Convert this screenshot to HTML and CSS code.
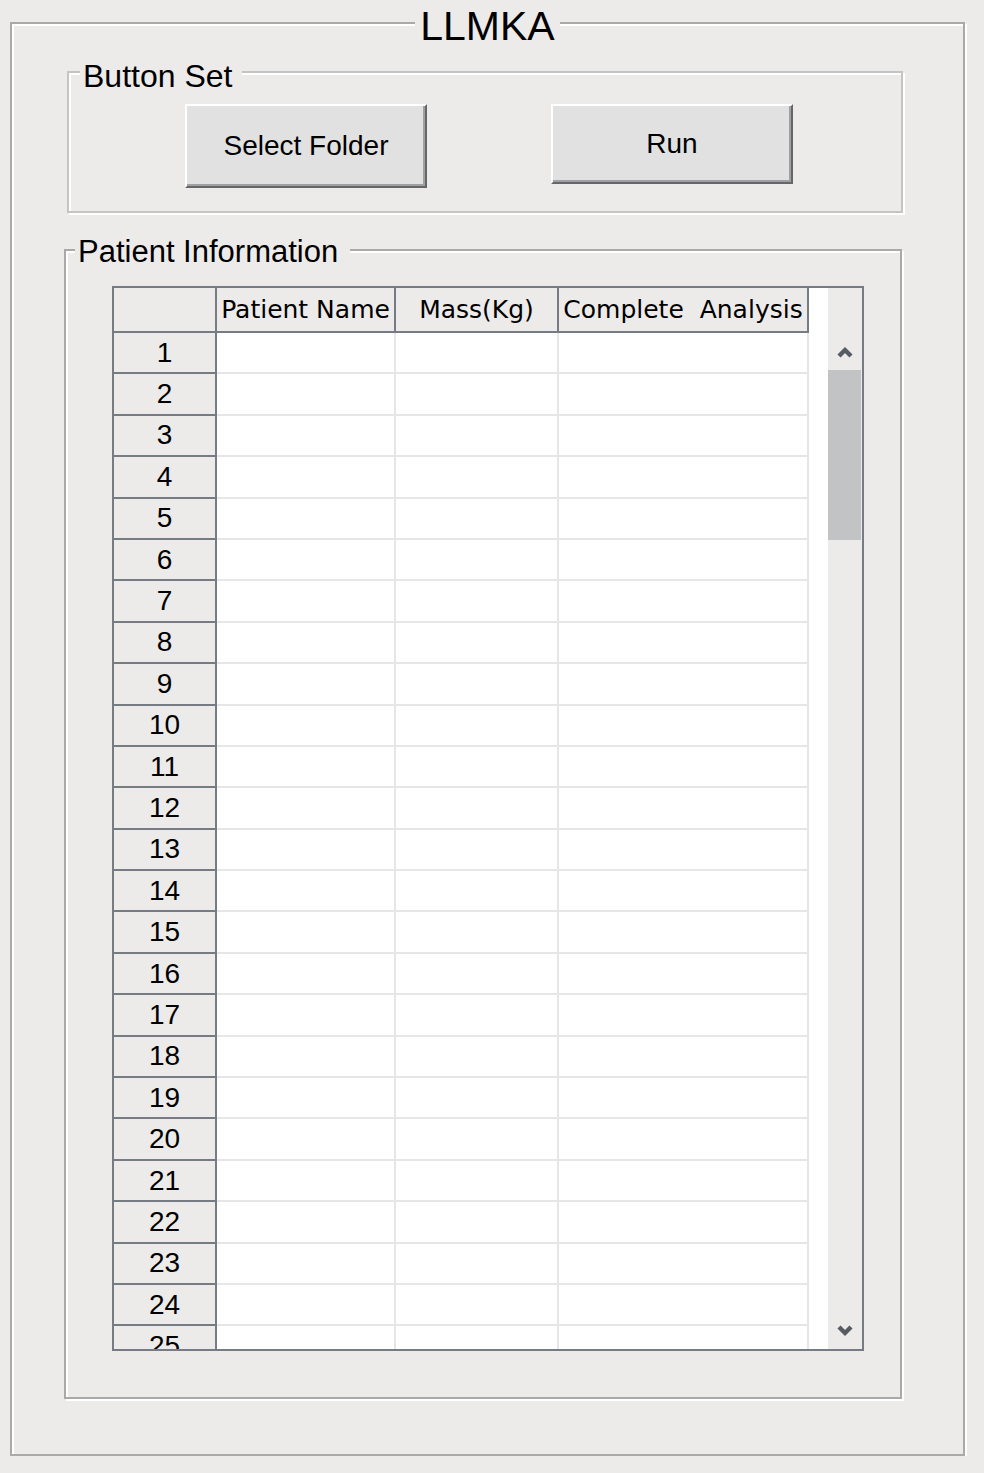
FILE: index.html
```html
<!DOCTYPE html>
<html lang="en">
<head>
  <meta charset="utf-8">
  <title>LLMKA</title>
  <meta name="viewport" content="width=device-width,initial-scale=1">
  <link rel="stylesheet" href="styles.css">
</head>
<body>

  <fieldset class="frame app">
    <legend>LLMKA</legend>

    <!-- Buttons -->
    <fieldset class="frame btn-set">
      <legend>Button Set</legend>
      <div class="btn-row">
        <button class="btn">Select Folder</button>
        <button class="btn run">Run</button>
      </div>
    </fieldset>

    <!-- Patient table -->
    <fieldset class="frame patients">
      <legend>Patient Information</legend>
      <div class="sheet-wrap">
        <div class="sheet">
          <div class="cells">
            <div class="row head">
              <div class="cell rh"></div>
              <div class="cell c-name">Patient Name</div>
              <div class="cell c-mass">Mass(Kg)</div>
              <div class="cell c-done">Complete  Analysis</div>
            </div>
            <div class="row"><div class="cell rh">1</div><div class="cell c-name"></div><div class="cell c-mass"></div><div class="cell c-done"></div></div>
            <div class="row"><div class="cell rh">2</div><div class="cell c-name"></div><div class="cell c-mass"></div><div class="cell c-done"></div></div>
            <div class="row"><div class="cell rh">3</div><div class="cell c-name"></div><div class="cell c-mass"></div><div class="cell c-done"></div></div>
            <div class="row"><div class="cell rh">4</div><div class="cell c-name"></div><div class="cell c-mass"></div><div class="cell c-done"></div></div>
            <div class="row"><div class="cell rh">5</div><div class="cell c-name"></div><div class="cell c-mass"></div><div class="cell c-done"></div></div>
            <div class="row"><div class="cell rh">6</div><div class="cell c-name"></div><div class="cell c-mass"></div><div class="cell c-done"></div></div>
            <div class="row"><div class="cell rh">7</div><div class="cell c-name"></div><div class="cell c-mass"></div><div class="cell c-done"></div></div>
            <div class="row"><div class="cell rh">8</div><div class="cell c-name"></div><div class="cell c-mass"></div><div class="cell c-done"></div></div>
            <div class="row"><div class="cell rh">9</div><div class="cell c-name"></div><div class="cell c-mass"></div><div class="cell c-done"></div></div>
            <div class="row"><div class="cell rh">10</div><div class="cell c-name"></div><div class="cell c-mass"></div><div class="cell c-done"></div></div>
            <div class="row"><div class="cell rh">11</div><div class="cell c-name"></div><div class="cell c-mass"></div><div class="cell c-done"></div></div>
            <div class="row"><div class="cell rh">12</div><div class="cell c-name"></div><div class="cell c-mass"></div><div class="cell c-done"></div></div>
            <div class="row"><div class="cell rh">13</div><div class="cell c-name"></div><div class="cell c-mass"></div><div class="cell c-done"></div></div>
            <div class="row"><div class="cell rh">14</div><div class="cell c-name"></div><div class="cell c-mass"></div><div class="cell c-done"></div></div>
            <div class="row"><div class="cell rh">15</div><div class="cell c-name"></div><div class="cell c-mass"></div><div class="cell c-done"></div></div>
            <div class="row"><div class="cell rh">16</div><div class="cell c-name"></div><div class="cell c-mass"></div><div class="cell c-done"></div></div>
            <div class="row"><div class="cell rh">17</div><div class="cell c-name"></div><div class="cell c-mass"></div><div class="cell c-done"></div></div>
            <div class="row"><div class="cell rh">18</div><div class="cell c-name"></div><div class="cell c-mass"></div><div class="cell c-done"></div></div>
            <div class="row"><div class="cell rh">19</div><div class="cell c-name"></div><div class="cell c-mass"></div><div class="cell c-done"></div></div>
            <div class="row"><div class="cell rh">20</div><div class="cell c-name"></div><div class="cell c-mass"></div><div class="cell c-done"></div></div>
            <div class="row"><div class="cell rh">21</div><div class="cell c-name"></div><div class="cell c-mass"></div><div class="cell c-done"></div></div>
            <div class="row"><div class="cell rh">22</div><div class="cell c-name"></div><div class="cell c-mass"></div><div class="cell c-done"></div></div>
            <div class="row"><div class="cell rh">23</div><div class="cell c-name"></div><div class="cell c-mass"></div><div class="cell c-done"></div></div>
            <div class="row"><div class="cell rh">24</div><div class="cell c-name"></div><div class="cell c-mass"></div><div class="cell c-done"></div></div>
            <div class="row"><div class="cell rh">25</div><div class="cell c-name"></div><div class="cell c-mass"></div><div class="cell c-done"></div></div>
          </div>

          <!-- vertical scrollbar -->
          <div class="vscroll">
            <div class="vscroll-top"></div>
            <div class="vscroll-btn">
              <svg width="16" height="12" viewBox="0 0 16 12"><path d="M2 10 L8 4 L14 10" fill="none" stroke="#585b62" stroke-width="4.4"/></svg>
            </div>
            <div class="vscroll-thumb"></div>
            <div class="vscroll-track"></div>
            <div class="vscroll-btn">
              <svg width="16" height="12" viewBox="0 0 16 12"><path d="M2 2 L8 8 L14 2" fill="none" stroke="#585b62" stroke-width="4.4"/></svg>
            </div>
          </div>
        </div>
      </div>
    </fieldset>
  </fieldset>

</body>
</html>
```

FILE: styles.css
```css
/* RESET */
* { box-sizing:border-box; margin:0; padding:0; }
html, body { background:#ecebe9; color:#000; font-family:"Liberation Sans", Arial, sans-serif; }

/* ETCHED GROUP FRAMES */
.frame {
  border:2px solid #a9a9a9;
  box-shadow:2px 2px 0 #fff, inset 2px 2px 0 #fff;
  min-inline-size:0;
}
.frame > legend { background:#ecebe9; white-space:nowrap; }

.app { width:955px; margin-left:10px; padding-bottom:55px; }
.app > legend {
  margin:0 auto; padding:6px 5px 0;
  font-size:41px; line-height:40px;
}

/* BUTTON SET */
.btn-set { width:836px; margin:4px 0 0 55px; border-color:#c4c4c4; }
.btn-set > legend {
  margin-left:11px; padding:8px 10px 0 3px;
  font-size:32px; line-height:36px;
}
.btn-row {
  display:flex; align-items:flex-start; gap:124px;
  padding:10px 0 23px 116px;
}
.btn {
  width:242px; height:84px;
  background:#e1e1e1; color:#000;
  border:2px solid; border-color:#fff #65666a #65666a #fff;
  box-shadow:inset -2px -2px 0 #a0a0a0;
  font:28px "Liberation Sans", Arial, sans-serif;
}
.btn.run { height:80px; }

/* PATIENT INFORMATION */
.patients { width:838px; margin:18px 0 0 52px; }
.patients > legend {
  margin-left:9px; padding:4px 12px 0 3px;
  font-size:31px; line-height:34px;
}
.sheet-wrap { padding:17px 0 46px 46px; }

/* TABLE */
.sheet {
  width:752px; height:1065px;
  border:2px solid #777b83;
  display:flex; overflow:hidden;
}
.cells { width:714px; background:#fff; }
.row { display:flex; height:41.4px; flex-shrink:0; }
.row.head { height:45px; }
.cell {
  border-right:2px solid #e6e6e6; border-bottom:2px solid #e6e6e6;
}
.c-name { width:179px; }
.c-mass { width:163px; }
.c-done { width:250px; }

.rh {
  width:103px; background:#ecebe9; border-color:#777b83;
  display:flex; align-items:center; justify-content:center;
  font-size:28px;
}
.head .cell {
  background:#ecebe9; border-color:#777b83;
  display:flex; align-items:center; justify-content:center;
  font-family:"DejaVu Sans", sans-serif; font-size:25px;
  white-space:pre;
}

/* SCROLLBAR */
.vscroll {
  width:34px; display:flex; flex-direction:column;
  background:#ecebe9;
}
.vscroll-top { height:45px; }
.vscroll-btn {
  height:37px; display:flex; align-items:center; justify-content:center;
}
.vscroll-thumb { height:170px; width:33px; background:#c2c3c5; }
.vscroll-track { flex:1; }
```
